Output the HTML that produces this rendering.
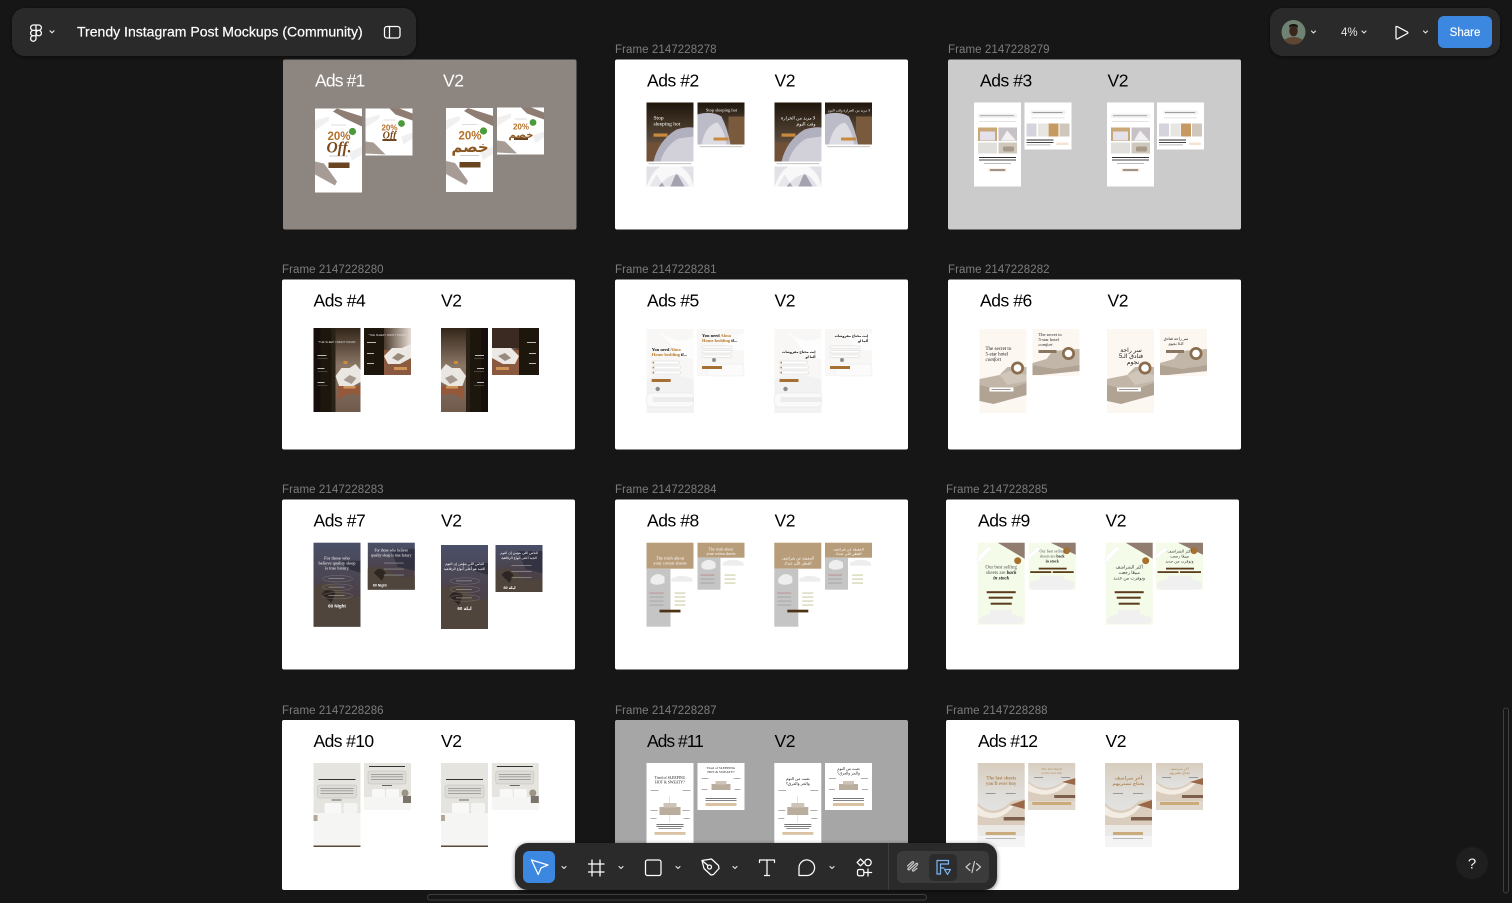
<!DOCTYPE html>
<html lang="en"><head><meta charset="utf-8"><title>Trendy Instagram Post Mockups (Community)</title>
<style>
html,body{margin:0;padding:0;background:#161616;overflow:hidden;width:1512px;height:903px}
svg{display:block;position:absolute;left:0;top:0}
text{font-family:"Liberation Sans","DejaVu Sans",sans-serif}
.lb{font-size:11.5px;fill:#7d7d7d;letter-spacing:.08px}
.h{font-size:17.5px;fill:#000;letter-spacing:-.45px}
.s{font-family:"Liberation Serif","DejaVu Sans",serif}
.ic{fill:none;stroke:#fff;stroke-width:1.25;stroke-linecap:round;stroke-linejoin:round}
.ch{fill:none;stroke:#e6e6e6;stroke-width:1.1;stroke-linecap:round;stroke-linejoin:round}
</style></head><body>
<svg width="1512" height="903" viewBox="0 0 1512 903" xmlns="http://www.w3.org/2000/svg">
<defs>
<filter id="sh" x="-10%" y="-30%" width="120%" height="170%"><feDropShadow dx="0" dy="1" stdDeviation="2" flood-color="#000" flood-opacity=".55"/></filter>
<filter id="soft" filterUnits="userSpaceOnUse" x="0" y="0" width="1512" height="903"><feGaussianBlur stdDeviation=".22"/></filter>
<linearGradient id="g2" x1="0" y1="0" x2="0" y2="1"><stop offset="0" stop-color="#1f160d"/><stop offset="1" stop-color="#7b6551"/></linearGradient>
<linearGradient id="g4" x1="0" y1="0" x2="0" y2="1"><stop offset="0" stop-color="#33261a"/><stop offset=".45" stop-color="#8b7766"/><stop offset="1" stop-color="#6f5a4c"/></linearGradient>
<linearGradient id="g4s" x1="0" y1="0" x2="1" y2="0"><stop offset="0" stop-color="#4a3a2d"/><stop offset="1" stop-color="#e8ddd4"/></linearGradient>
<linearGradient id="g7" x1="0" y1="0" x2="0" y2="1"><stop offset="0" stop-color="#4a5068"/><stop offset=".45" stop-color="#4c4450"/><stop offset="1" stop-color="#4a3c36"/></linearGradient>
<linearGradient id="g12" x1="0" y1="0" x2="0" y2="1"><stop offset="0" stop-color="#d8cdbe"/><stop offset=".4" stop-color="#dfdedb"/><stop offset="1" stop-color="#eeeeee"/></linearGradient>

<g id="a1m"><rect width="47" height="84" fill="#fff"/><path d="M0 12L14 8V12L0 22zM34 44L47 38V46L37 52z" fill="#f0f0f0"/><path d="M18 3L22 0L47 8V18L30 10z" fill="#8f7d73"/><path d="M0 53L9 55L22 73L20 77L0 66z" fill="#a69c95"/><circle cx="37.500" cy="23" r="3.600" fill="#4c9a3a"/><rect x="13.500" y="54" width="21" height="5.500" fill="#6a4524"/><rect x="14" y="47" width="19" height="1" fill="#ccc"/><rect x="16" y="16" width="15" height="1" fill="#ddd"/></g>
<g id="a1s"><rect width="47" height="47" fill="#fff"/><path d="M0 10L14 6V10L0 19zM36 28L47 24V30L38 36z" fill="#f0f0f0"/><path d="M24 0H34L47 5V12L30 6z" fill="#8f7d73"/><path d="M0 33L8 34L20 46L0 45z" fill="#a69c95"/><circle cx="36" cy="15" r="3.400" fill="#4c9a3a"/><rect x="17" y="30.500" width="14" height="2" fill="#6a4524"/><rect x="18" y="11" width="12" height="1" fill="#ddd"/></g>

<g id="a2m"><rect width="47" height="84" fill="#fff"/><rect width="47" height="59" fill="url(#g2)"/><rect x="0" y="40" width="16" height="19" fill="#6f5138"/><path d="M7 59Q12 38 30 27Q40 24 47 25V59z" fill="#b1b0bf"/><path d="M14 59Q18 44 32 36L47 34V59z" fill="#d2d1da"/><rect x="7" y="31" width="14" height="3.200" fill="#c98a3d"/><rect x="2" y="60.500" width="43" height="1.200" fill="#ccc"/><rect y="64" width="47" height="20" fill="#e2e1e7"/><path d="M3 84L10 72L18 84zM24 84L30 70L38 84z" fill="#a5a1ae"/><path d="M0 84Q6 68 14 64H34Q44 70 47 84H43Q36 72 30 72Q22 72 12 84z" fill="#fff" opacity=".75"/></g>
<g id="a2s"><rect width="47" height="47" fill="#fff"/><rect width="47" height="42" fill="url(#g2)"/><rect x="31" y="14" width="16" height="28" fill="#7a5a3d"/><path d="M0 42V12Q14 8 24 14Q30 26 33 42z" fill="#bcbbc8"/><path d="M4 42Q8 22 20 20Q27 28 29 42z" fill="#dddce3"/><rect x="16" y="35" width="15" height="3" fill="#c98a3d"/><rect x="2" y="43.500" width="43" height="1.200" fill="#ccc"/></g>

<g id="a3m"><rect width="47" height="84" fill="#fff"/><rect x="4" y="11" width="39" height="4.500" rx="2" fill="#f1f1f1"/><rect x="6" y="12.800" width="34" height=".8" fill="#999"/><rect x="5" y="18.500" width="37" height=".8" fill="#ddd"/><rect x="4" y="25" width="19" height="13.500" fill="#c9a777"/><rect x="6" y="29" width="15" height="9" fill="#e3e1e9"/><rect x="24.500" y="25" width="18.500" height="13.500" fill="#c7c2c6"/><path d="M27 38L33 28L42 38z" fill="#f2f0f0"/><rect x="4" y="40" width="19" height="11" fill="#e0dfdc"/><rect x="24.500" y="40" width="18.500" height="11" fill="#cfc8bd"/><rect x="29" y="44" width="11" height="5" rx="1.500" fill="#a89a88"/><rect x="5" y="54.500" width="37" height="1" fill="#333"/><rect x="5" y="57" width="37" height="1" fill="#444"/><rect x="10" y="60.500" width="27" height=".8" fill="#aaa"/><rect x="14.500" y="66" width="18" height="3.200" fill="#f6e4d2"/><rect x="16" y="67" width="15" height="1" fill="#444"/></g>
<g id="a3s"><rect width="47" height="47" fill="#fff"/><rect x="6" y="8" width="35" height="4" rx="2" fill="#f1f1f1"/><rect x="8" y="9.500" width="30" height=".8" fill="#888"/><rect x="7" y="15" width="33" height=".8" fill="#ddd"/><rect x="2" y="21" width="10" height="13" fill="#d5d3dc"/><rect x="13.500" y="21" width="10" height="13" fill="#e8e6e0"/><rect x="24" y="21" width="10" height="13" fill="#c49a62"/><rect x="35" y="21" width="10" height="13" fill="#cfc7bc"/><rect x="2" y="37" width="27" height="1" fill="#333"/><rect x="2" y="39.500" width="27" height="1" fill="#444"/><rect x="2" y="42" width="24" height=".8" fill="#aaa"/><rect x="32" y="40" width="12" height="2.500" fill="#f6e4d2"/></g>

<g id="a4m"><rect width="47" height="84" fill="#1e150c"/><rect x="22" width="25" height="84" fill="url(#g4)"/><rect x="0" width="7" height="84" fill="#140e08"/><rect x="18" width="4" height="84" fill="#2b2016"/><path d="M22 48L28 40H36L42 36L47 42V54L38 59H26z" fill="#eae6e2"/><path d="M30 52L36 47L43 50L38 56z" fill="#a69a90"/><rect x="30" y="33" width="4" height="3" fill="#d08a3e"/><path d="M24 58H47V68Q36 62 24 72z" fill="#95593a"/><rect x="30" y="58" width="12" height="2.500" fill="#cf9454"/><rect x="4" y="27" width="9" height="1" fill="#bbb"/><rect x="4" y="40" width="7" height="1" fill="#bbb"/><rect x="4" y="54" width="7" height="1" fill="#bbb"/><rect x="4" y="30" width="10" height=".6" fill="#665"/><rect x="4" y="43" width="10" height=".6" fill="#665"/><rect x="4" y="57" width="10" height=".6" fill="#665"/></g>
<g id="a4s"><rect width="47" height="47" fill="#1e150c"/><rect x="20" width="27" height="47" fill="url(#g4s)"/><rect x="20" y="22" width="27" height="25" fill="#8a5a3f"/><path d="M20 28L28 20H38L47 16V30L36 36H24z" fill="#ece8e4"/><path d="M28 30L34 25L41 28L34 33z" fill="#998a7e"/><rect x="30" y="39" width="13" height="3" fill="#cf9454"/><rect x="3" y="14" width="9" height="1" fill="#bbb"/><rect x="3" y="25" width="7" height="1" fill="#bbb"/><rect x="3" y="35" width="7" height="1" fill="#bbb"/></g>

<g id="a5m"><rect width="47" height="84" fill="#f8f7f6"/><path d="M0 50Q20 42 47 50V84H0z" fill="#f2f2f2"/><path d="M10 0Q30 18 47 8V30Q30 28 22 12z" fill="#fdfdfd"/><rect x="5" y="32" width="28" height="3" rx="1.500" fill="#fff" stroke="#bbb" stroke-width=".3"/><rect x="5" y="37" width="29" height="3" rx="1.500" fill="#fff" stroke="#bbb" stroke-width=".3"/><rect x="5" y="42" width="29" height="3" rx="1.500" fill="#fff" stroke="#bbb" stroke-width=".3"/><rect x="6" y="32.800" width="1.500" height="1.500" fill="#b77a2a"/><rect x="6" y="37.800" width="1.500" height="1.500" fill="#b77a2a"/><rect x="6" y="42.800" width="1.500" height="1.500" fill="#b77a2a"/><rect x="5" y="50" width="19" height="3" fill="#a66f30"/><rect x="0" y="64" width="47" height="14" rx="4" fill="#fafafa" stroke="#e4e4e4" stroke-width=".5"/><rect x="6" y="68" width="41" height="5" fill="#ececec"/><circle cx="11" cy="60" r="2.200" fill="#8c8c8c"/></g>
<g id="a5s"><rect width="47" height="47" fill="#f8f7f6"/><path d="M14 0Q32 10 47 4V22Q30 22 24 8z" fill="#fdfdfd"/><rect x="5" y="17" width="30" height="2.500" rx="1.200" fill="#fff" stroke="#bbb" stroke-width=".3"/><rect x="5" y="21.500" width="30" height="2.500" rx="1.200" fill="#fff" stroke="#bbb" stroke-width=".3"/><rect x="5" y="26" width="30" height="2.500" rx="1.200" fill="#fff" stroke="#bbb" stroke-width=".3"/><rect x="10" y="35" width="37" height="12" rx="3" fill="#fbfbfb" stroke="#e4e4e4" stroke-width=".4"/><rect x="5" y="37" width="20" height="3" fill="#a66f30"/><circle cx="17" cy="31" r="2" fill="#8c8c8c"/></g>

<g id="a6m"><rect width="47" height="84" fill="#fdf7f1"/><path d="M0 50L20 46L28 38L47 38V66L18 72L0 70z" fill="#c2b6a8"/><path d="M0 56L24 62L47 54V66L14 75L0 72z" fill="#b0a394"/><path d="M20 46L30 42L47 46V52L28 56z" fill="#d0c6b9"/><circle cx="38" cy="39" r="6.500" fill="#8a6d4f"/><circle cx="38" cy="39" r="3.800" fill="#fff"/><rect x="10" y="58.500" width="24" height="4" fill="#fff"/><rect x="12" y="60" width="19" height=".8" fill="#777"/></g>
<g id="a6s"><rect width="47" height="47" fill="#fdf7f1"/><path d="M0 34L14 30L20 22L47 20V42L16 45H0z" fill="#c2b6a8"/><path d="M0 36L22 40L47 36V42L8 46H0z" fill="#b0a394"/><circle cx="36" cy="24.500" r="6.500" fill="#8a6d4f"/><circle cx="36" cy="24.500" r="3.800" fill="#fff"/><rect x="6" y="21" width="18" height="3" fill="#8a7460"/></g>

<g id="a7m"><rect width="47" height="84" fill="url(#g7)"/><path d="M0 44Q18 36 28 48Q36 60 47 52V84H0z" fill="#50443e"/><path d="M8 52Q14 42 22 50L18 60z" fill="#2f2724"/><path d="M26 18H47V30L34 26z" fill="#2a2c38" opacity=".8"/><ellipse cx="24" cy="36" rx="15" ry="3.200" fill="none" stroke="#a8a098" stroke-width=".25"/><ellipse cx="24" cy="44.500" rx="15" ry="3.200" fill="none" stroke="#a8a098" stroke-width=".25"/><ellipse cx="24" cy="53" rx="15" ry="3.200" fill="none" stroke="#a8a098" stroke-width=".25"/><rect x="15" y="35.600" width="16" height=".6" fill="#aaa"/><rect x="15" y="44.100" width="16" height=".6" fill="#aaa"/><rect x="15" y="52.600" width="16" height=".6" fill="#aaa"/></g>
<g id="a7s"><rect width="47" height="47" fill="url(#g7)"/><path d="M0 26Q14 20 24 30Q34 40 47 32V47H0z" fill="#50443e"/><path d="M6 30Q12 22 18 30L14 38z" fill="#2f2724"/><path d="M22 6H47V28L30 24z" fill="#262a3a" opacity=".7"/><rect x="16" y="20" width="20" height=".7" fill="#999"/><rect x="16" y="26" width="20" height=".7" fill="#999"/><rect x="16" y="32" width="20" height=".7" fill="#999"/></g>

<g id="a8m"><rect width="47" height="84" fill="#fff"/><rect width="47" height="26" fill="#b89d7a"/><rect y="26" width="24" height="58" fill="#c5c5c5"/><path d="M4 36Q10 28 18 34V40Q10 44 4 40z" fill="#eee"/><path d="M25 36Q36 30 46 36V39H25z" fill="#ededed"/><rect x="3" y="50" width="14" height=".7" fill="#b77"/><rect x="3" y="54" width="14" height=".7" fill="#999"/><rect x="3" y="58" width="14" height=".7" fill="#999"/><rect x="3" y="62" width="14" height=".7" fill="#999"/><rect x="28" y="50" width="11" height=".7" fill="#b0b270"/><rect x="28" y="54" width="11" height=".7" fill="#b0b270"/><rect x="28" y="58" width="11" height=".7" fill="#b0b270"/><rect x="28" y="62" width="11" height=".7" fill="#b0b270"/><rect x="13" y="67" width="21" height="2.700" fill="#4d3116"/></g>
<g id="a8s"><rect width="47" height="47" fill="#fff"/><rect width="47" height="15" fill="#b89d7a"/><rect y="15" width="23" height="32" fill="#c5c5c5"/><path d="M4 21Q10 14 18 20V25Q10 29 4 25z" fill="#eee"/><path d="M25 20Q36 14 46 20V23H25z" fill="#ededed"/><rect x="3" y="32" width="14" height=".7" fill="#b77"/><rect x="3" y="36" width="14" height=".7" fill="#999"/><rect x="3" y="40" width="14" height=".7" fill="#999"/><rect x="27" y="32" width="11" height=".7" fill="#b0b270"/><rect x="27" y="36" width="11" height=".7" fill="#b0b270"/><rect x="27" y="40" width="11" height=".7" fill="#b0b270"/></g>

<g id="a9m"><rect width="47" height="82" fill="#f5fbe9"/><path d="M20 0H47V16z" fill="#917b70"/><path d="M0 14L11 3L14 6L0 21z" fill="#fff" stroke="#e8e8e8" stroke-width=".4"/><circle cx="40" cy="18" r="3.500" fill="#a7702f"/><rect x="9" y="48.500" width="29" height="2" fill="#5a3a1e"/><rect x="11" y="54" width="24" height="2" fill="#5a3a1e"/><rect x="13" y="60" width="21" height="2" fill="#5a3a1e"/><path d="M1 78Q2 73 12 72L13 67H34L35 72Q46 73 46 78Q46 81 40 81H6Q1 81 1 78z" fill="#f0f0f0"/></g>
<g id="a9s"><rect width="47" height="47" fill="#f5fbe9"/><path d="M22 0H47V12z" fill="#917b70"/><path d="M0 12L9 4L12 6L0 17z" fill="#fff" stroke="#e8e8e8" stroke-width=".4"/><circle cx="38" cy="8" r="3.400" fill="#a7702f"/><rect x="10" y="25" width="28" height="1.800" fill="#5a3a1e"/><rect x="1.500" y="28.500" width="21" height="1.800" fill="#5a3a1e"/><rect x="24" y="28.500" width="21" height="1.800" fill="#5a3a1e"/><path d="M1 42Q1 38 11 37L12 33H35L36 37Q46 38 46 42Q46 47 40 47H6Q1 47 1 42z" fill="#f0f0f0"/></g>

<g id="a10m"><rect width="47" height="84" fill="#e6e4df"/><rect x="4" y="22" width="39" height="13" rx="2" fill="#dedcd7" stroke="#aaa" stroke-width=".3"/><rect x="7" y="25" width="33" height=".7" fill="#888"/><rect x="7" y="27.500" width="33" height=".7" fill="#888"/><rect x="7" y="30" width="33" height=".7" fill="#888"/><rect x="5" y="16" width="37" height="1" fill="#333"/><rect x="18" y="36.500" width="10" height="1" fill="#666"/><rect x="11" y="40" width="17" height="10" rx="1.500" fill="#f8f8f6"/><rect x="30" y="40" width="14" height="10" rx="1.500" fill="#f4f4f2"/><path d="M0 50H47V84H0z" fill="#f5f5f3"/><rect y="82.500" width="47" height="1.500" fill="#5a4a3a"/><rect x="0" y="52" width="4" height="6" fill="#b5a898"/></g>
<g id="a10s"><rect width="47" height="47" fill="#e6e4df"/><rect x="4" y="8" width="38" height="13" rx="2" fill="#dedcd7" stroke="#aaa" stroke-width=".3"/><rect x="7" y="11" width="32" height=".7" fill="#888"/><rect x="7" y="13.500" width="32" height=".7" fill="#888"/><rect x="7" y="16" width="32" height=".7" fill="#888"/><rect x="5" y="3" width="36" height="1" fill="#333"/><rect x="18" y="22" width="10" height="1" fill="#666"/><rect x="8" y="26" width="13" height="9" rx="1.500" fill="#f8f8f6"/><rect x="22" y="26" width="13" height="9" rx="1.500" fill="#f8f8f6"/><rect y="34" width="47" height="13" fill="#f5f5f3"/><circle cx="41" cy="30" r="3.500" fill="#9a9386"/><rect x="39" y="33" width="8" height="7" fill="#7a756c"/></g>

<g id="a11m"><rect width="47" height="84" fill="#fff"/><rect x="13" y="44" width="21" height="8" fill="#b9ad9e"/><rect x="17" y="40" width="13" height="4.500" fill="#cdc3b6"/><rect x="4" y="27" width="8" height=".8" fill="#999"/><rect x="36" y="27" width="8" height=".8" fill="#999"/><rect x="4" y="47" width="7" height=".8" fill="#999"/><rect x="36" y="47" width="7" height=".8" fill="#999"/><rect x="4" y="55" width="6" height=".8" fill="#999"/><rect x="37" y="55" width="6" height=".8" fill="#999"/><rect x="23" y="33" width=".4" height="8" fill="#bbb"/><rect x="23" y="52" width=".4" height="7" fill="#bbb"/><rect x="10" y="61" width="27" height=".8" fill="#555"/><rect x="10" y="63" width="27" height=".8" fill="#555"/><rect x="12" y="65" width="23" height=".8" fill="#777"/><rect x="8" y="69" width="31" height="2.800" fill="#d9c3a3"/></g>
<g id="a11s"><rect width="47" height="47" fill="#fff"/><rect x="14" y="21" width="19" height="6" fill="#b9ad9e"/><rect x="18" y="18" width="11" height="3.500" fill="#cdc3b6"/><rect x="4" y="15" width="7" height=".8" fill="#999"/><rect x="36" y="15" width="7" height=".8" fill="#999"/><rect x="4" y="26" width="6" height=".8" fill="#999"/><rect x="37" y="26" width="6" height=".8" fill="#999"/><rect x="8" y="35" width="31" height=".8" fill="#555"/><rect x="8" y="37" width="31" height=".8" fill="#666"/><rect x="8" y="40" width="31" height="3" fill="#d9c3a3"/></g>

<g id="a12m"><rect width="47" height="84" fill="url(#g12)"/><path d="M0 40Q16 56 34 38L47 36V62H0z" fill="#dacdbd"/><path d="M0 43Q16 58 34 41L38 40Q24 62 0 52z" fill="#f3ece3"/><path d="M32 42L47 37V46z" fill="#9a674a"/><rect x="0" y="62" width="47" height="8" fill="#ece8e3"/><rect x="26" y="54" width="21" height="3.500" fill="#7b604e"/><rect x="8" y="69" width="30" height="3" fill="#c9ab7b"/><rect x="0" y="73" width="47" height="11" fill="#f4f4f4"/><rect x="8" y="75" width="30" height=".8" fill="#aaa"/><rect x="8" y="30" width="10" height=".8" fill="#888"/><rect x="28" y="30" width="10" height=".8" fill="#888"/></g>
<g id="a12s"><rect width="47" height="47" fill="url(#g12)"/><path d="M0 18Q16 32 36 18L47 16V47H0z" fill="#dacdbd"/><path d="M0 20Q16 34 36 20L40 20Q24 38 0 28z" fill="#f3ece3"/><path d="M34 19L47 15V22z" fill="#9a674a"/><rect x="0" y="38" width="47" height="9" fill="#e0d8cc"/><rect x="26" y="32" width="21" height="3" fill="#7b604e"/><rect x="4" y="39" width="39" height="3" fill="#c9ab7b"/><rect x="6" y="14" width="9" height=".8" fill="#888"/><rect x="33" y="14" width="9" height=".8" fill="#888"/></g>
</defs>

<rect width="1512" height="903" fill="#161616"/>

<!-- Frames -->
<rect x="283" y="59.500" width="293.500" height="170" rx="2" fill="#8d8680"/>
<rect x="615" y="59.500" width="293" height="170" rx="2" fill="#fff"/>
<rect x="948" y="59.500" width="293" height="170" rx="2" fill="#cbcbcb"/>
<rect x="282" y="279.500" width="293" height="170" rx="2" fill="#fff"/>
<rect x="615" y="279.500" width="293" height="170" rx="2" fill="#fff"/>
<rect x="948" y="279.500" width="293" height="170" rx="2" fill="#fff"/>
<rect x="282" y="499.500" width="293" height="170" rx="2" fill="#fff"/>
<rect x="615" y="499.500" width="293" height="170" rx="2" fill="#fff"/>
<rect x="946" y="499.500" width="293" height="170" rx="2" fill="#fff"/>
<rect x="282" y="720" width="293" height="170" rx="2" fill="#fff"/>
<rect x="615" y="720" width="293" height="170" rx="2" fill="#a6a6a6"/>
<rect x="946" y="720" width="293" height="170" rx="2" fill="#fff"/>

<!-- Labels -->
<text class="lb" x="615" y="53">Frame 2147228278</text>
<text class="lb" x="948" y="53">Frame 2147228279</text>
<text class="lb" x="282" y="273">Frame 2147228280</text>
<text class="lb" x="615" y="273">Frame 2147228281</text>
<text class="lb" x="948" y="273">Frame 2147228282</text>
<text class="lb" x="282" y="493">Frame 2147228283</text>
<text class="lb" x="615" y="493">Frame 2147228284</text>
<text class="lb" x="946" y="493">Frame 2147228285</text>
<text class="lb" x="282" y="714">Frame 2147228286</text>
<text class="lb" x="615" y="714">Frame 2147228287</text>
<text class="lb" x="946" y="714">Frame 2147228288</text>

<!-- Headings -->
<text class="h" x="315" y="86.500" style="fill:#fff;letter-spacing:-.85px">Ads #1</text><text class="h" x="443" y="86.500" style="fill:#fff">V2</text>
<text class="h" x="647" y="86.500">Ads #2</text><text class="h" x="774.500" y="86.500">V2</text>
<text class="h" x="980" y="86.500">Ads #3</text><text class="h" x="1107.500" y="86.500">V2</text>
<text class="h" x="313.500" y="306.500">Ads #4</text><text class="h" x="441" y="306.500">V2</text>
<text class="h" x="647" y="306.500">Ads #5</text><text class="h" x="774.500" y="306.500">V2</text>
<text class="h" x="980" y="306.500">Ads #6</text><text class="h" x="1107.500" y="306.500">V2</text>
<text class="h" x="313.500" y="526.500">Ads #7</text><text class="h" x="441" y="526.500">V2</text>
<text class="h" x="647" y="526.500">Ads #8</text><text class="h" x="774.500" y="526.500">V2</text>
<text class="h" x="978" y="526.500">Ads #9</text><text class="h" x="1105.500" y="526.500">V2</text>
<text class="h" x="313.500" y="747" style="letter-spacing:-.6px">Ads #10</text><text class="h" x="441" y="747">V2</text>
<text class="h" x="647" y="747" style="letter-spacing:-1px">Ads #11</text><text class="h" x="774.500" y="747">V2</text>
<text class="h" x="978" y="747" style="letter-spacing:-.7px">Ads #12</text><text class="h" x="1105.500" y="747">V2</text>

<g filter="url(#soft)">
<!-- Ad 1 -->
<g transform="translate(315,108.500)"><use href="#a1m"/><text x="24" y="31.500" font-size="11.500" font-weight="700" fill="#b4712c" text-anchor="middle">20%</text><text x="24" y="44" class="s" font-size="15.500" font-weight="700" font-style="italic" fill="#7a4c1e" text-anchor="middle">Off.</text></g>
<g transform="translate(365.500,108.500)"><use href="#a1s"/><text x="24" y="22" font-size="8" font-weight="700" fill="#b4712c" text-anchor="middle">20%</text><text x="24" y="30" class="s" font-size="10" font-weight="700" font-style="italic" fill="#7a4c1e" text-anchor="middle">Off</text></g>
<g transform="translate(446,108)"><use href="#a1m"/><text x="24" y="31.500" font-size="11.500" font-weight="700" fill="#b4712c" text-anchor="middle">20%</text><text x="24" y="44" font-size="15" font-weight="700" fill="#8a5620" text-anchor="middle">خصم</text></g>
<g transform="translate(497,107.500)"><use href="#a1s"/><text x="24" y="22" font-size="8" font-weight="700" fill="#b4712c" text-anchor="middle">20%</text><text x="24" y="30.500" font-size="10" font-weight="700" fill="#8a5620" text-anchor="middle">خصم</text></g>

<!-- Ad 2 -->
<g transform="translate(646.500,102.500)"><use href="#a2m"/><text x="7" y="17" class="s" font-size="5.500" fill="#fff">Stop</text><text x="7" y="23" class="s" font-size="5.500" fill="#fff">sleeping hot</text></g>
<g transform="translate(697.500,102.500)"><use href="#a2s"/><text x="24" y="9" class="s" font-size="4.500" fill="#fff" text-anchor="middle">Stop sleeping hot</text></g>
<g transform="translate(774.500,102.500)"><use href="#a2m"/><text x="41" y="17" font-size="4.500" fill="#fff" text-anchor="end">لا مزيد من الحرارة</text><text x="41" y="23" font-size="4.500" fill="#fff" text-anchor="end">وقت النوم</text></g>
<g transform="translate(825,102.500)"><use href="#a2s"/><text x="24" y="9" font-size="3.500" fill="#fff" text-anchor="middle">لا مزيد من الحرارة وقت النوم</text></g>

<!-- Ad 3 -->
<use href="#a3m" x="974" y="102.500"/><use href="#a3s" x="1024.500" y="102.500"/>
<use href="#a3m" x="1107" y="102.500"/><use href="#a3s" x="1157" y="102.500"/>

<!-- Ad 4 -->
<g transform="translate(313.500,328)"><use href="#a4m"/><text x="23.500" y="15" font-size="2.800" fill="#ddd" text-anchor="middle">"THE SLEEP I DIDN'T KNOW"</text></g>
<g transform="translate(364,328)"><use href="#a4s"/><text x="23.500" y="8" font-size="2.800" fill="#ddd" text-anchor="middle">"THE SLEEP I DIDN'T KNOW"</text></g>
<g transform="translate(488,328) scale(-1,1)"><use href="#a4m"/></g>
<g transform="translate(539,328) scale(-1,1)"><use href="#a4s"/><rect x="20" width="27" height="20" fill="#3a2c20"/></g>

<!-- Ad 5 -->
<g transform="translate(646.700,329)"><use href="#a5m"/><text x="5" y="22" class="s" font-size="4.500" font-weight="700" fill="#111">You need <tspan fill="#b77a2a">Alma</tspan></text><text x="5" y="27" class="s" font-size="4.500" font-weight="700" fill="#b77a2a">Home bedding <tspan fill="#111">if...</tspan></text></g>
<g transform="translate(697,329)"><use href="#a5s"/><text x="5" y="8" class="s" font-size="4.500" font-weight="700" fill="#111">You need <tspan fill="#b77a2a">Alma</tspan></text><text x="5" y="13" class="s" font-size="4.500" font-weight="700" fill="#b77a2a">Home bedding <tspan fill="#111">if...</tspan></text></g>
<g transform="translate(774.500,329)"><use href="#a5m"/><text x="41" y="24" font-size="3.300" font-weight="700" fill="#111" text-anchor="end">إنت محتاج مفروشات</text><text x="41" y="29" font-size="3.300" font-weight="700" fill="#111" text-anchor="end">ألما لو</text></g>
<g transform="translate(825,329)"><use href="#a5s"/><text x="43" y="8" font-size="3.300" font-weight="700" fill="#111" text-anchor="end">إنت محتاج مفروشات</text><text x="43" y="13" font-size="3.300" font-weight="700" fill="#111" text-anchor="end">ألما لو</text></g>

<!-- Ad 6 -->
<g transform="translate(979.500,329)"><use href="#a6m"/><text x="6" y="21" class="s" font-size="5" fill="#222">The secret to</text><text x="6" y="26.500" class="s" font-size="5" fill="#222">5-star hotel</text><text x="6" y="32" class="s" font-size="5" font-style="italic" fill="#222">comfort</text></g>
<g transform="translate(1032.500,329)"><use href="#a6s"/><text x="6" y="7" class="s" font-size="4.500" fill="#222">The secret to</text><text x="6" y="12" class="s" font-size="4.500" fill="#222">5-star hotel</text><text x="6" y="17" class="s" font-size="4.500" font-style="italic" fill="#222">comfort</text></g>
<g transform="translate(1107,329)"><use href="#a6m"/><text x="24" y="23" font-size="6" fill="#222" text-anchor="middle">سر راحة</text><text x="24" y="29" font-size="6" fill="#222" text-anchor="middle">فنادق الـ5</text><text x="26" y="35" font-size="6" fill="#222" text-anchor="middle">نجوم</text></g>
<g transform="translate(1160,329)"><use href="#a6s"/><text x="16" y="11" font-size="4" fill="#222" text-anchor="middle">سر راحة فنادق</text><text x="16" y="16" font-size="4" fill="#222" text-anchor="middle">الـ5 نجوم</text></g>

<!-- Ad 7 -->
<g transform="translate(313.500,542.700)"><use href="#a7m"/><text x="23.500" y="17" class="s" font-size="4.500" fill="#fff" text-anchor="middle">For those who</text><text x="23.500" y="22" class="s" font-size="4.500" fill="#fff" text-anchor="middle">believe quality sleep</text><text x="23.500" y="27" class="s" font-size="4.500" fill="#fff" text-anchor="middle">is true luxury</text><text x="23.500" y="65" font-size="4.500" font-weight="700" fill="#fff" text-anchor="middle">60 Night</text></g>
<g transform="translate(367.800,542.700)"><use href="#a7s"/><text x="23.500" y="9" class="s" font-size="3.800" fill="#fff" text-anchor="middle">For those who believe</text><text x="23.500" y="14" class="s" font-size="3.800" fill="#fff" text-anchor="middle">quality sleep is true luxury</text><text x="12" y="44" font-size="3.500" font-weight="700" fill="#fff" text-anchor="middle">60 Night</text></g>
<g transform="translate(441,545)"><use href="#a7m"/><text x="23.500" y="20" font-size="3.600" fill="#fff" text-anchor="middle">للناس اللي بتؤمن إن النوم</text><text x="23.500" y="25" font-size="3.600" fill="#fff" text-anchor="middle">الجيد هو أعلى أنواع الرفاهية</text><text x="23.500" y="65" font-size="4.500" font-weight="700" fill="#fff" text-anchor="middle">60 ليلة</text></g>
<g transform="translate(495.500,545)"><use href="#a7s"/><text x="23.500" y="9" font-size="3.500" fill="#fff" text-anchor="middle">للناس اللي بتؤمن إن النوم</text><text x="23.500" y="14" font-size="3.500" fill="#fff" text-anchor="middle">الجيد أعلى أنواع الرفاهية</text><text x="14" y="44" font-size="3.800" font-weight="700" fill="#fff" text-anchor="middle">60 ليلة</text></g>

<!-- Ad 8 -->
<g transform="translate(646.500,542.700)"><use href="#a8m"/><text x="23.500" y="17" class="s" font-size="4.600" fill="#fff" text-anchor="middle">The truth about</text><text x="23.500" y="21.800" class="s" font-size="4.600" fill="#fff" text-anchor="middle">your cotton sheets</text></g>
<g transform="translate(697.500,542.700)"><use href="#a8s"/><text x="23.500" y="8" class="s" font-size="4" fill="#fff" text-anchor="middle">The truth about</text><text x="23.500" y="12.500" class="s" font-size="4" fill="#fff" text-anchor="middle">your cotton sheets</text></g>
<g transform="translate(774.300,542.700)"><use href="#a8m"/><text x="23.500" y="17" font-size="3.800" fill="#fff" text-anchor="middle">الحقيقة عن شراشف</text><text x="23.500" y="21.800" font-size="3.800" fill="#fff" text-anchor="middle">القطن اللي عندك</text></g>
<g transform="translate(825,542.700)"><use href="#a8s"/><text x="23.500" y="8" font-size="3.600" fill="#fff" text-anchor="middle">الحقيقة عن شراشف</text><text x="23.500" y="12.500" font-size="3.600" fill="#fff" text-anchor="middle">القطن اللي عندك</text></g>

<!-- Ad 9 -->
<g transform="translate(977.700,542.700)"><use href="#a9m"/><text x="23.500" y="26" class="s" font-size="5" fill="#555" text-anchor="middle">Our best selling</text><text x="23.500" y="31.500" class="s" font-size="5" fill="#555" text-anchor="middle">sheets are <tspan font-weight="700" font-style="italic" fill="#222">back</tspan></text><text x="23.500" y="37" class="s" font-size="5" font-weight="700" font-style="italic" fill="#222" text-anchor="middle">in stock</text></g>
<g transform="translate(1028.700,542.700)"><use href="#a9s"/><text x="23.500" y="10" class="s" font-size="4" fill="#555" text-anchor="middle">Our best selling</text><text x="23.500" y="15" class="s" font-size="4" fill="#555" text-anchor="middle">sheets are <tspan font-weight="700" fill="#222">back</tspan></text><text x="23.500" y="20" class="s" font-size="4" font-weight="700" fill="#222" text-anchor="middle">in stock</text></g>
<g transform="translate(1105.700,542.700)"><use href="#a9m"/><text x="23.500" y="26" font-size="4.500" fill="#333" text-anchor="middle">أكثر الشراشف</text><text x="23.500" y="31.500" font-size="4.500" fill="#333" text-anchor="middle">مبيعًا رجعت</text><text x="23.500" y="37" font-size="4.500" fill="#333" text-anchor="middle">وتوفرت من جديد</text></g>
<g transform="translate(1156,542.700)"><use href="#a9s"/><text x="23.500" y="10" font-size="4" fill="#333" text-anchor="middle">أكثر الشراشف</text><text x="23.500" y="15" font-size="4" fill="#333" text-anchor="middle">مبيعًا رجعت</text><text x="23.500" y="20" font-size="4" fill="#333" text-anchor="middle">وتوفرت من جديد</text></g>

<!-- Ad 10 -->
<use href="#a10m" x="313.500" y="763"/><use href="#a10s" x="364" y="763"/>
<use href="#a10m" x="441" y="763"/><use href="#a10s" x="491.800" y="763"/>

<!-- Ad 11 -->
<g transform="translate(646.500,763)"><use href="#a11m"/><text x="23.500" y="16" class="s" font-size="3.800" fill="#222" text-anchor="middle">Tired of SLEEPING</text><text x="23.500" y="20.500" class="s" font-size="3.800" fill="#222" text-anchor="middle">HOT &amp; SWEATY?</text></g>
<g transform="translate(697.500,763)"><use href="#a11s"/><text x="23.500" y="6" class="s" font-size="3.500" fill="#222" text-anchor="middle">Tired of SLEEPING</text><text x="23.500" y="10" class="s" font-size="3.500" fill="#222" text-anchor="middle">HOT &amp; SWEATY?</text></g>
<g transform="translate(774.300,763)"><use href="#a11m"/><text x="23.500" y="17" font-size="4" fill="#222" text-anchor="middle">تعبت من النوم</text><text x="23.500" y="22" font-size="4" fill="#222" text-anchor="middle">والحر والعرق؟</text></g>
<g transform="translate(825,763)"><use href="#a11s"/><text x="23.500" y="7" font-size="3.800" fill="#222" text-anchor="middle">تعبت من النوم</text><text x="23.500" y="11.500" font-size="3.800" fill="#222" text-anchor="middle">والحر والعرق؟</text></g>

<!-- Ad 12 -->
<g transform="translate(977.700,763)"><use href="#a12m"/><text x="23.500" y="16.500" class="s" font-size="4.800" font-weight="700" fill="#b08a5a" text-anchor="middle">The last sheets</text><text x="23.500" y="22" class="s" font-size="4.800" font-weight="700" fill="#b08a5a" text-anchor="middle">you'll ever buy</text></g>
<g transform="translate(1028.200,763)"><use href="#a12s"/><text x="23.500" y="7" class="s" font-size="3.500" fill="#b08a5a" text-anchor="middle">The last sheets</text><text x="23.500" y="11" class="s" font-size="3.500" fill="#b08a5a" text-anchor="middle">you'll ever buy</text></g>
<g transform="translate(1105,763)"><use href="#a12m"/><text x="23.500" y="16.500" font-size="4.500" font-weight="700" fill="#b08a5a" text-anchor="middle">آخر شراشف</text><text x="23.500" y="22" font-size="4.500" font-weight="700" fill="#b08a5a" text-anchor="middle">تحتاج تشتريهم</text></g>
<g transform="translate(1156,763)"><use href="#a12s"/><text x="23.500" y="7" font-size="3.500" fill="#b08a5a" text-anchor="middle">آخر شراشف</text><text x="23.500" y="11" font-size="3.500" fill="#b08a5a" text-anchor="middle">تحتاج تشتريهم</text></g>
</g>

<!-- Top-left bar -->
<rect x="12" y="8" width="404" height="48" rx="13" fill="#2c2c2c" filter="url(#sh)"/>
<g class="ic" transform="translate(28.500,24)" stroke-width="1.200"><path d="M7.500 1H4.800a2.700 2.700 0 0 0 0 5.400h2.700zM7.500 1h2.700a2.700 2.700 0 0 1 0 5.400H7.500zM7.500 6.400H4.800a2.700 2.700 0 0 0 0 5.400h2.700zM4.800 11.800h2.700v2.700a2.700 2.700 0 1 1-2.700-2.700z"/><circle cx="10.200" cy="9.100" r="2.700"/></g>
<path class="ch" d="M50 30.800l2 2 2-2"/>
<text x="77" y="36.500" font-size="14.040" fill="#fff" stroke="#fff" stroke-width=".2">Trendy Instagram Post Mockups (Community)</text>
<g class="ic"><rect x="384.500" y="26.500" width="15.500" height="11.500" rx="2.500"/><path d="M389.500 26.500v11.500"/></g>

<!-- Top-right bar -->
<rect x="1270" y="8" width="230" height="48" rx="13" fill="#2c2c2c" filter="url(#sh)"/>
<circle cx="1293.500" cy="32" r="12" fill="#6f8274"/>
<path d="M1284 40q4-3 9.500-3t9.500 3a12 12 0 0 1-19 0z" fill="#5f4632"/>
<ellipse cx="1293.500" cy="31" rx="4.200" ry="5.400" fill="#3a261b"/><path d="M1289 28q4-4 9 0l-.5-3q-4-2-8 0z" fill="#15100c"/>
<path class="ch" d="M1311.500 31l2 2 2-2"/>
<text x="1341" y="36" font-size="11.500" fill="#e6e6e6">4%</text>
<path class="ch" d="M1362 31l2 2 2-2"/>
<path class="ic" stroke-width="1.400" d="M1396 26.500v11.500q0 1.500 1.500 .8l9.800-5.300q1.200-.8 0-1.600l-9.800-5.200q-1.500-.7-1.500 .8z"/>
<path class="ch" d="M1423.500 31l2 2 2-2"/>
<rect x="1438" y="16" width="54" height="32" rx="6" fill="#3c87e0"/>
<text x="1465" y="36" font-size="11.500" fill="#fff" text-anchor="middle" stroke="#fff" stroke-width=".15">Share</text>

<!-- Bottom toolbar -->
<rect x="515" y="843" width="482" height="47" rx="13" fill="#2c2c2c" filter="url(#sh)"/>
<rect x="523" y="851" width="32" height="32" rx="6" fill="#3c87e0"/>
<path class="ic" stroke-width="1.300" d="M531.500 860l16.500 5-6.800 2.800-3 6.700z"/>
<path class="ch" d="M562 866.500l2 2 2-2"/>
<path class="ic" d="M592 860v16M600 860v16M588.500 864h15.500M588.500 872h15.500"/>
<path class="ch" d="M619 866.500l2 2 2-2"/>
<rect class="ic" x="645.500" y="860" width="15.500" height="15.500" rx="2"/>
<path class="ch" d="M676 866.500l2 2 2-2"/>
<path class="ic" d="M702 860.500l9.500-1.500 7 6.500 .5 3-5.500 6-2.500 .5-7-6.500z"/><circle class="ic" cx="709.500" cy="867" r="2"/><path class="ic" d="M702 860.500l6 5"/>
<path class="ch" d="M733 866.500l2 2 2-2"/>
<path class="ic" d="M759.500 862.500v-2.500h15v2.500M767 860v15.500M764.500 875.500h5"/>
<path class="ic" d="M799 875.500h8.500a7.800 7.800 0 1 0-8.500-7.800z"/>
<path class="ch" d="M830 866.500l2 2 2-2"/>
<path class="ic" d="M860.500 859l3.400 3.400-3.400 3.400-3.400-3.400z"/><circle class="ic" cx="868" cy="862.500" r="3.200"/><rect class="ic" x="857.500" y="869.500" width="6.300" height="6.300" rx="1.500"/><path class="ic" d="M868 869v7M864.800 872.500h6.800"/>
<path d="M888.500 843v47" stroke="#3e3e3e"/>
<rect x="897" y="851" width="92" height="32" rx="6" fill="#3b3b3b"/>
<rect x="929" y="854" width="28" height="27" rx="5" fill="#2c2c2c"/>
<path fill="none" stroke="#c9c9c9" stroke-width="1.200" stroke-linecap="round" stroke-linejoin="round" d="M907.500 866l4.500-4c1-1 2.300.2 1.300 1.200l-5 5c-1 1 .2 2.200 1.200 1.300l6.500-5.800c1-1 2.300.2 1.300 1.200l-4.500 4.600c-1 1 .2 2.200 1.200 1.300l3-2.600"/>
<g fill="none" stroke="#7cb6f2" stroke-width="1.200" stroke-linejoin="round"><path d="M937 874v-13.500h11.500v3.500h-8v10zM940.500 868h4"/><path d="M944.500 869.500h6l-3 5z"/></g>
<path fill="none" stroke="#c9c9c9" stroke-width="1.200" stroke-linecap="round" stroke-linejoin="round" d="M970 863.500l-4 3.500 4 3.500M976.500 863.500l4 3.500-4 3.500M974.500 861.500l-2.500 11"/>

<!-- Scrollbars -->
<rect x="427.500" y="894.500" width="499" height="5.500" rx="2.700" fill="none" stroke="#3f3f3f"/>
<rect x="1503.500" y="708" width="5" height="185" rx="2.500" fill="none" stroke="#3f3f3f"/>

<!-- Help -->
<circle cx="1472" cy="863" r="16" fill="#1f1f1f"/>
<text x="1472" y="868.500" font-size="15" fill="#f0f0f0" text-anchor="middle">?</text>
</svg>
</body></html>
